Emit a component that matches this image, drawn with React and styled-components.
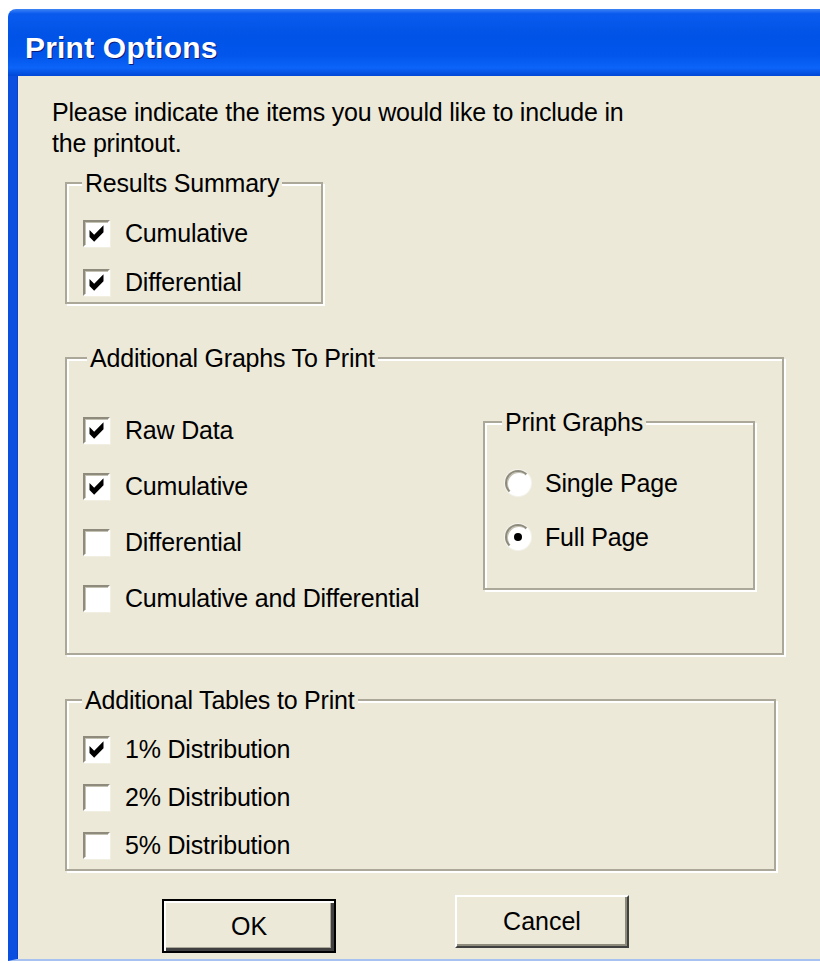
import React from 'react';
import styled, {createGlobalStyle} from 'styled-components';

const GlobalStyle = createGlobalStyle`
  html, body {
    margin: 0;
    padding: 0;
    background: #fff;
    overflow: hidden;
  }
  body {
    font-family: "Liberation Sans", Arial, sans-serif;
  }
`;

const Window = styled.div`
  margin: 9px 0 0 8px;
  width: 840px;
  border-top-left-radius: 8px;
  overflow: hidden;
`;

const TitleBar = styled.div`
  height: 67px;
  display: flex;
  align-items: center;
  padding-left: 17px;
  background: linear-gradient(to bottom,
    #3d83f5 0%, #0a5aee 7%, #0053e6 40%, #0256ec 70%, #0c64f8 88%, #0047d6 100%);
`;

const Title = styled.h1`
  margin: 10px 0 0 0;
  font-family: "Liberation Sans", Arial, sans-serif;
  font-size: 30px;
  line-height: 34px;
  font-weight: bold;
  color: #fff;
  text-shadow: 1px 1px 0 #0a1b7a;
  letter-spacing: 0.2px;
`;

const Client = styled.div`
  height: 885px;
  box-sizing: border-box;
  padding: 21px 0 0 35px;
  background: #ece9d8;
  border-left: 9px solid #0a4fe0;
  border-bottom: 2px solid #a7c1f0;
  box-shadow: inset 1px 0 0 #0b3fcf;
  font-size: 25px;
  color: #000;
`;

const Intro = styled.p`
  margin: 0;
  line-height: 31px;
  white-space: nowrap;
  letter-spacing: -0.2px;
`;

const Group = styled.fieldset`
  margin: ${({mt}) => mt}px 0 0 13px;
  padding: ${({pad}) => pad};
  width: ${({w}) => w}px;
  min-width: 0;
  box-sizing: border-box;
  border: 2px solid #aca899;
  box-shadow: inset 2px 2px 0 #fff, 2px 2px 0 #fff;
`;

/* the legend sits inside the fieldset's left padding, so offsets are relative to it */
const Legend = styled.legend`
  margin-left: ${({offset}) => offset}px;
  padding: 0 3px;
  line-height: 30px;
  background: #ece9d8;
  letter-spacing: -0.2px;
`;

const Stack = styled.div`
  display: flex;
  flex-direction: column;
  gap: ${({gap}) => gap}px;
  margin-top: ${({mt}) => mt || 0}px;
`;

const Split = styled.div`
  display: flex;
  justify-content: space-between;
  align-items: flex-start;
`;

const InnerGroup = styled(Group)`
  margin: 0;
`;

const Row = styled.label`
  display: flex;
  align-items: center;
  gap: ${({gap}) => gap || 15}px;
  height: 26px;
  white-space: nowrap;
  letter-spacing: -0.2px;
`;

const Box = styled.span`
  width: 27px;
  height: 27px;
  box-sizing: border-box;
  display: flex;
  align-items: center;
  justify-content: center;
  background: #fff;
  border: 2px solid;
  border-color: #8e8b7c #fff #fff #8e8b7c;
  box-shadow: inset 1px 1px 0 #c4c1b2, 1px 1px 0 #f1efe2;

  svg {
    width: 21px;
    height: 21px;
  }
`;

const Radio = styled.span`
  width: 26px;
  height: 26px;
  box-sizing: border-box;
  border-radius: 50%;
  display: flex;
  align-items: center;
  justify-content: center;
  background: #fff;
  border: 2px solid;
  border-color: #8e8b7c #fff #fff #8e8b7c;
  box-shadow: inset 1px 1px 0 #c4c1b2, 0 0 0 1px #f4f3ec;

  &::after {
    content: '';
    width: 8px;
    height: 8px;
    border-radius: 50%;
    background: ${({on}) => (on ? '#000' : 'transparent')};
  }
`;

const Buttons = styled.div`
  display: flex;
  align-items: flex-start;
  margin-top: 24px;
  padding-left: 110px;
  gap: 119px;
`;

const Button = styled.button`
  width: 174px;
  height: ${({primary}) => (primary ? 54 : 53)}px;
  margin-top: ${({primary}) => (primary ? 4 : 0)}px;
  box-sizing: border-box;
  background: #ece9d8;
  font-family: "Liberation Sans", Arial, sans-serif;
  font-size: 25px;
  color: #000;
  padding: 0;
  border: 2px solid;
  border-color: ${({primary}) => (primary ? '#000' : '#fff #404040 #404040 #fff')};
  box-shadow: ${({primary}) => (primary
    ? 'inset 2px 2px 0 #fff, inset -3px -3px 0 #404040, inset -4px -4px 0 #aca899'
    : 'inset -2px -2px 0 #8e8b7c')};
`;

const Check = () => (
  <svg viewBox="0 0 9 9">
    <polygon points="1.5,3 3.5,5 7.5,1 7.5,4 3.5,8 1.5,6" fill="#000" />
  </svg>
);

const CheckRow = ({checked, children}) => (
  <Row>
    <Box>{checked && <Check />}</Box>
    {children}
  </Row>
);

const App = () => {
  return (
    <>
      <GlobalStyle />
      <Window>
        <TitleBar>
          <Title>Print Options</Title>
        </TitleBar>
        <Client>
          <Intro>
            Please indicate the items you would like to include in
            <br />
            the printout.
          </Intro>

          <Group mt={9} w={258} pad="22px 0 7px 16px">
            <Legend offset={-1}>Results Summary</Legend>
            <Stack gap={23}>
              <CheckRow checked>Cumulative</CheckRow>
              <CheckRow checked>Differential</CheckRow>
            </Stack>
          </Group>

          <Group mt={39} w={719} pad="34px 27px 42px 16px">
            <Legend offset={4}>Additional Graphs To Print</Legend>
            <Split>
              <Stack gap={30} mt={10}>
                <CheckRow checked>Raw Data</CheckRow>
                <CheckRow checked>Cumulative</CheckRow>
                <CheckRow>Differential</CheckRow>
                <CheckRow>Cumulative and Differential</CheckRow>
              </Stack>
              <InnerGroup w={272} pad="33px 0 38px 20px">
                <Legend offset={-3}>Print Graphs</Legend>
                <Stack gap={28}>
                  <Row gap={14}><Radio />Single Page</Row>
                  <Row gap={14}><Radio on />Full Page</Row>
                </Stack>
              </InnerGroup>
            </Split>
          </Group>

          <Group mt={30} w={711} pad="21px 0 11px 16px">
            <Legend offset={-1}>Additional Tables to Print</Legend>
            <Stack gap={22}>
              <CheckRow checked>1% Distribution</CheckRow>
              <CheckRow>2% Distribution</CheckRow>
              <CheckRow>5% Distribution</CheckRow>
            </Stack>
          </Group>

          <Buttons>
            <Button primary>OK</Button>
            <Button>Cancel</Button>
          </Buttons>
        </Client>
      </Window>
    </>
  );
};

export default App;
